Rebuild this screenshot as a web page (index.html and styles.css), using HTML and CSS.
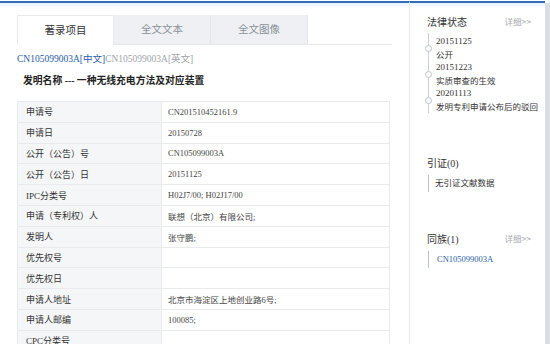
FILE: index.html
```html
<!DOCTYPE html>
<html lang="zh">
  <head>
    <meta charset="UTF-8" />
    <title>专利详情</title>
    <link rel="stylesheet" href="styles.css">
  </head>
  <body>
    <div class="page">
      <div class="main">
        <div class="tabs">
          <div class="tab active">著录项目</div>
          <div class="tab">全文文本</div>
          <div class="tab">全文图像</div>
        </div>
        <div class="lang-links">
          <a class="cur">CN105099003A[中文]</a><a class="other">CN105099003A[英文]</a>
        </div>
        <h1 class="patent-title">发明名称 --- 一种无线充电方法及对应装置</h1>
        <table class="biblio">
          <tr><td class="label">申请号</td><td>CN201510452161.9</td></tr>
          <tr><td class="label">申请日</td><td>20150728</td></tr>
          <tr><td class="label">公开（公告）号</td><td>CN105099003A</td></tr>
          <tr><td class="label">公开（公告）日</td><td>20151125</td></tr>
          <tr><td class="label">IPC分类号</td><td>H02J7/00; H02J17/00</td></tr>
          <tr><td class="label">申请（专利权）人</td><td>联想（北京）有限公司;</td></tr>
          <tr><td class="label">发明人</td><td>张守鹏;</td></tr>
          <tr><td class="label">优先权号</td><td></td></tr>
          <tr><td class="label">优先权日</td><td></td></tr>
          <tr><td class="label">申请人地址</td><td>北京市海淀区上地创业路6号;</td></tr>
          <tr><td class="label">申请人邮编</td><td>100085;</td></tr>
          <tr><td class="label">CPC分类号</td><td></td></tr>
        </table>
      </div>

      <div class="side">
        <div class="box-head">
          <h3>法律状态</h3>
          <a class="more">详细&gt;&gt;</a>
        </div>
        <ul class="timeline">
          <li><span class="date">20151125</span><span class="event">公开</span></li>
          <li><span class="date">20151223</span><span class="event">实质审查的生效</span></li>
          <li><span class="date">20201113</span><span class="event">发明专利申请公布后的驳回</span></li>
        </ul>

        <div class="box-head cite-head">
          <h3>引证(0)</h3>
        </div>
        <div class="bar-item">无引证文献数据</div>

        <div class="box-head family-head">
          <h3>同族(1)</h3>
          <a class="more">详细&gt;&gt;</a>
        </div>
        <div class="bar-item link">CN105099003A</div>
      </div>

      <div class="scroll"></div>
    </div>
  </body>
</html>
```

FILE: styles.css
```css
html,
body {
  margin: 0;
  padding: 0;
  height: 100%;
  overflow: hidden;
  background: #fff;
  font-family: "Liberation Serif", "Noto Sans CJK SC", serif;
  color: #333;
}
.page {
  display: flex;
  height: 100%;
  border-top: 1px solid #fff;
  box-sizing: border-box;
}
.main {
  width: 409px;
  padding: 12px 0 0 17px;
  box-sizing: border-box;
  flex: none;
  border-top: 2px solid #2f6db5;
  background: linear-gradient(#eaf3fc, #fff 6px);
}

/* tabs */
.tabs {
  display: flex;
  border-bottom: 1px solid #e6e8ec;
  width: 375px;
}
.tab {
  width: 97px;
  height: 29px;
  line-height: 29px;
  text-align: center;
  font-size: 10.5px;
  color: #8a9099;
  background: #eef0f3;
  border-right: 1px solid #e3e5e9;
  box-sizing: border-box;
}
.tab.active {
  background: #fff;
  color: #333;
  border: 1px solid #e8eaee;
  border-bottom: none;
  margin-bottom: -1px;
  height: 30px;
}

.lang-links {
  font-size: 9.5px;
  margin-top: 8px;
  height: 12px;
  line-height: 12px;
}
.lang-links .cur {
  color: #2a5da8;
}
.lang-links .other {
  color: #a0a4aa;
}
.patent-title {
  margin: 8px 0 0 6px;
  font-size: 9.8px;
  font-weight: bold;
  color: #222;
  line-height: 16px;
  height: 16px;
}

/* bibliographic table */
.biblio {
  margin-top: 12px;
  width: 373px;
  border-collapse: collapse;
  font-size: 8.5px;
}
.biblio td {
  height: 19.8px;
  padding: 0 0 0 6px;
  border: 1px solid #e8eaee;
  color: #444;
  background: #fff;
}
.biblio td.label {
  width: 135px;
  padding-left: 8px;
  font-size: 9px;
  color: #333;
  background: #f5f6f8;
}

/* right column */
.side {
  flex: 1;
  border-left: 1px solid #e6e8ec;
  border-top: 2px solid #2f6db5;
  padding: 9px 14px 0 17px;
  background: linear-gradient(#eaf3fc, #fff 6px);
  overflow: hidden;
}
.box-head {
  display: flex;
  justify-content: space-between;
  align-items: center;
  height: 18px;
}
.box-head h3 {
  margin: 0;
  font-size: 10px;
  font-weight: normal;
  color: #333;
}
.more {
  font-size: 8.5px;
  color: #a4a8ae;
  font-family: "Noto Sans CJK SC", sans-serif;
}
.timeline {
  list-style: none;
  margin: 3px 0 0 1px;
  padding: 2px 0 0 7px;
  border-left: 1px solid #c9d2dc;
  width: 120px;
  white-space: nowrap;
}
.timeline li {
  position: relative;
  height: 26px;
}
.timeline li::before {
  content: "";
  position: absolute;
  left: -11px;
  top: 10px;
  width: 7px;
  height: 7px;
  box-sizing: border-box;
  border: 1px solid #b9c4d0;
  border-radius: 50%;
  background: #fff;
}
.timeline .date,
.timeline .event {
  display: block;
  line-height: 12px;
}
.timeline .date {
  font-size: 9px;
}
.timeline .event {
  margin-top: 2px;
  font-size: 8.5px;
  color: #333;
}
.cite-head {
  margin-top: 40px;
}
.family-head {
  margin-top: 37px;
}
.bar-item {
  margin: 4px 0 0 1px;
  padding-left: 6px;
  border-left: 1px solid #b8c0ca;
  font-size: 8.5px;
  line-height: 17px;
}
.bar-item.link {
  padding-left: 8px;
  color: #2a5da8;
}

.scroll {
  width: 5px;
  flex: none;
  background: #dadde1;
  margin-top: 2px;
}
```
